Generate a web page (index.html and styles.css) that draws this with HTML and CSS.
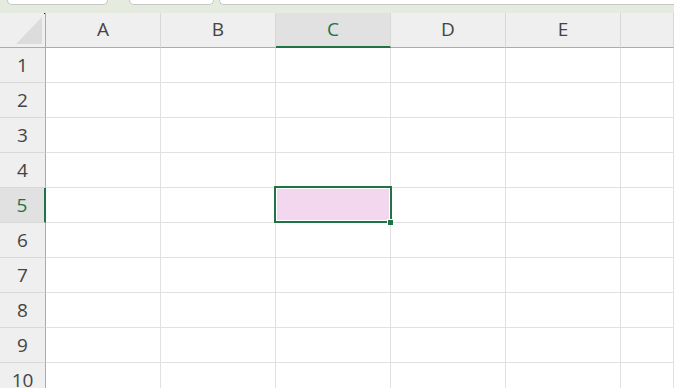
FILE: index.html
```html
<!DOCTYPE html>
<html lang="en">
<head>
    <meta charset="UTF-8">
    <meta name="viewport" content="width=device-width, initial-scale=1.0">
    <title>Sheet</title>
    <link rel="stylesheet" href="styles.css">
</head>
<body>
    <!-- Formula bar remnants -->
    <div class="toolbar">
        <div class="tool-box box-name"></div>
        <div class="tool-box box-fx"></div>
        <div class="tool-box box-formula"></div>
    </div>

    <!-- Sheet grid -->
    <div class="sheet">
        <div class="corner"><span class="corner-dot"></span><span class="corner-tri"></span></div>
        <div class="col-head">A</div>
        <div class="col-head">B</div>
        <div class="col-head active">C</div>
        <div class="col-head">D</div>
        <div class="col-head">E</div>
        <div class="col-head"></div>

        <div class="row-head">1</div><div class="cell"></div><div class="cell"></div><div class="cell"></div><div class="cell"></div><div class="cell"></div><div class="cell"></div>
        <div class="row-head">2</div><div class="cell"></div><div class="cell"></div><div class="cell"></div><div class="cell"></div><div class="cell"></div><div class="cell"></div>
        <div class="row-head">3</div><div class="cell"></div><div class="cell"></div><div class="cell"></div><div class="cell"></div><div class="cell"></div><div class="cell"></div>
        <div class="row-head">4</div><div class="cell"></div><div class="cell"></div><div class="cell"></div><div class="cell"></div><div class="cell"></div><div class="cell"></div>
        <div class="row-head active">5</div><div class="cell"></div><div class="cell"></div><div class="cell selected"><span class="fill-handle"></span></div><div class="cell"></div><div class="cell"></div><div class="cell"></div>
        <div class="row-head">6</div><div class="cell"></div><div class="cell"></div><div class="cell"></div><div class="cell"></div><div class="cell"></div><div class="cell"></div>
        <div class="row-head">7</div><div class="cell"></div><div class="cell"></div><div class="cell"></div><div class="cell"></div><div class="cell"></div><div class="cell"></div>
        <div class="row-head">8</div><div class="cell"></div><div class="cell"></div><div class="cell"></div><div class="cell"></div><div class="cell"></div><div class="cell"></div>
        <div class="row-head">9</div><div class="cell"></div><div class="cell"></div><div class="cell"></div><div class="cell"></div><div class="cell"></div><div class="cell"></div>
        <div class="row-head">10</div><div class="cell"></div><div class="cell"></div><div class="cell"></div><div class="cell"></div><div class="cell"></div><div class="cell"></div>
    </div>
</body>
</html>
```

FILE: styles.css
```css
body {
    margin: 0;
    padding: 0;
    width: 674px;
    height: 388px;
    overflow: hidden;
    background: #ffffff;
    font-family: 'Open Sans', 'Noto Sans', sans-serif;
    color: #444444;
}

.toolbar {
    height: 13px;
    background: #e6ebdf;
    display: flex;
    align-items: flex-start;
    overflow: hidden;
}

.tool-box {
    height: 4px;
    background: #ffffff;
    border: 1px solid #c6c6c6;
    border-top: none;
    border-radius: 0 0 5px 5px;
}

.box-name {
    margin-left: 7px;
    width: 99px;
}

.box-fx {
    margin-left: 21px;
    width: 83px;
}

.box-formula {
    margin-left: 5px;
    flex: 1;
    border-right: none;
    border-radius: 0 0 0 5px;
}

.sheet {
    display: grid;
    grid-template-columns: 46px repeat(5, 115px) 1fr;
    grid-template-rows: 35px repeat(10, 35px);
}

.corner {
    position: relative;
    background: #efefef;
    border-right: 1px solid #ababab;
    border-bottom: 1px solid #ababab;
}

.corner-tri {
    position: absolute;
    left: 16px;
    top: 4px;
    width: 0;
    height: 0;
    border-left: 26px solid transparent;
    border-bottom: 27px solid #dcdcdc;
}

.corner-dot {
    position: absolute;
    right: 0;
    top: 0;
    width: 1px;
    height: 1px;
    background: #222222;
}

.col-head {
    background: #efefef;
    border-right: 1px solid #d8d8d8;
    border-bottom: 1px solid #ababab;
    display: flex;
    align-items: center;
    justify-content: center;
    font-size: 19px;
    padding-bottom: 2px;
    box-sizing: border-box;
}

.col-head:last-child {
    border-right: none;
}

.col-head.active {
    background: #e1e1e1;
    border-bottom: 2px solid #217346;
    color: #217346;
}

.row-head {
    background: #efefef;
    border-right: 1px solid #ababab;
    border-bottom: 1px solid #d8d8d8;
    display: flex;
    align-items: center;
    justify-content: center;
    font-size: 19px;
}

.row-head.active {
    background: #e1e1e1;
    border-right: 2px solid #217346;
    color: #217346;
}

.cell {
    border-right: 1px solid #e1e1e1;
    border-bottom: 1px solid #e1e1e1;
}

.cell.selected {
    position: relative;
    background: #f2d7ee;
}

.cell.selected::after {
    content: "";
    position: absolute;
    top: -2px;
    left: -2px;
    right: -2px;
    bottom: -1px;
    border: 2px solid #217346;
    box-shadow: inset 0 0 0 1px #ffffff;
}

.fill-handle {
    position: absolute;
    right: -3px;
    bottom: -3px;
    width: 5px;
    height: 5px;
    background: #217346;
    border: 1px solid #ffffff;
    border-width: 1px 0 0 1px;
    z-index: 1;
}
```
